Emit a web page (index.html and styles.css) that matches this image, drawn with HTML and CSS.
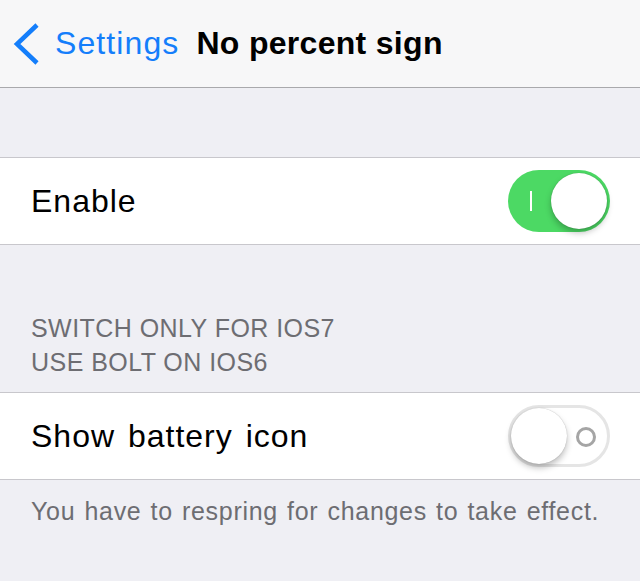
FILE: index.html
```html
<!DOCTYPE html>
<html lang="en">
<head>
    <meta charset="UTF-8">
    <meta name="viewport" content="width=device-width, initial-scale=1.0">
    <title>No percent sign</title>
    <link rel="stylesheet" href="styles.css">
</head>
<body>
    <div class="navbar">
        <a class="back" href="#">
            <svg class="chevron" width="28" height="44" viewBox="0 0 28 44">
                <path d="M25 3 L5 22 L25 41" fill="none" stroke="#147efb" stroke-width="4.5"/>
            </svg>
            <span>Settings</span>
        </a>
        <h1 class="title">No percent sign</h1>
    </div>

    <div class="spacer"></div>

    <div class="group">
        <div class="cell">
            <span class="label">Enable</span>
            <div class="switch on"><span class="mark"></span><span class="knob"></span></div>
        </div>
    </div>

    <div class="group-header">SWITCH ONLY FOR IOS7<br>USE BOLT ON IOS6</div>

    <div class="group">
        <div class="cell">
            <span class="label">Show battery icon</span>
            <div class="switch off"><span class="knob"></span><span class="ring"></span></div>
        </div>
    </div>

    <div class="group-footer">You have to respring for changes to take effect.</div>
</body>
</html>
```

FILE: styles.css
```css
/* Settings page, iOS 7 look */
body {
    margin: 0;
    background: #efeff4;
    font-family: "Liberation Sans", Arial, sans-serif;
    color: #000;
    height: 581px;
    overflow: hidden;
}

.navbar {
    height: 87px;
    background: #f7f7f8;
    border-bottom: 1px solid #a9a9ac;
    display: flex;
    align-items: center;
    padding-left: 12px;
}

.back {
    display: flex;
    align-items: center;
    color: #147efb;
    text-decoration: none;
    font-size: 32px;
    letter-spacing: 1.1px;
}

.chevron {
    margin-right: 15px;
}

.title {
    margin: 0 0 0 17px;
    font-size: 32px;
    font-weight: bold;
    letter-spacing: 0.3px;
}

.spacer {
    height: 69px;
}

.group {
    background: #fff;
    border-top: 1px solid #c8c7cc;
    border-bottom: 1px solid #c8c7cc;
}

.cell {
    height: 86px;
    display: flex;
    align-items: center;
    justify-content: space-between;
    padding: 0 30px 0 31px;
}

.label {
    font-size: 32px;
    letter-spacing: 1px;
    word-spacing: 3px;
}

.switch {
    position: relative;
    width: 102px;
    height: 62px;
    border-radius: 31px;
    box-sizing: border-box;
}

.switch.on {
    background: #4cd964;
}

.switch.off {
    background: #fff;
    border: 3px solid #e5e5e5;
}

.knob {
    position: absolute;
    width: 56px;
    height: 56px;
    border-radius: 50%;
    background: #fff;
    box-shadow: 0 4px 6px rgba(0, 0, 0, 0.25), 0 0 1px rgba(0, 0, 0, 0.3);
}

.switch.on .knob {
    top: 3px;
    right: 3px;
}

.switch.off .knob {
    top: 0;
    left: 0;
}

/* "on" bar drawn inside the green track */
.mark {
    position: absolute;
    left: 22px;
    top: 21px;
    width: 2px;
    height: 20px;
    background: #fff;
}

/* "off" ring drawn inside the empty track */
.ring {
    position: absolute;
    right: 11px;
    top: 19px;
    width: 14px;
    height: 14px;
    border: 3px solid #a5a5a5;
    border-radius: 50%;
}

.group-header {
    padding: 66px 31px 13px;
    font-size: 25px;
    line-height: 34px;
    color: #6d6d72;
    letter-spacing: 0.45px;
}

.group-footer {
    padding: 14px 31px;
    font-size: 25px;
    line-height: 34px;
    color: #6d6d72;
    letter-spacing: 0.7px;
    word-spacing: 1.5px;
}
```
